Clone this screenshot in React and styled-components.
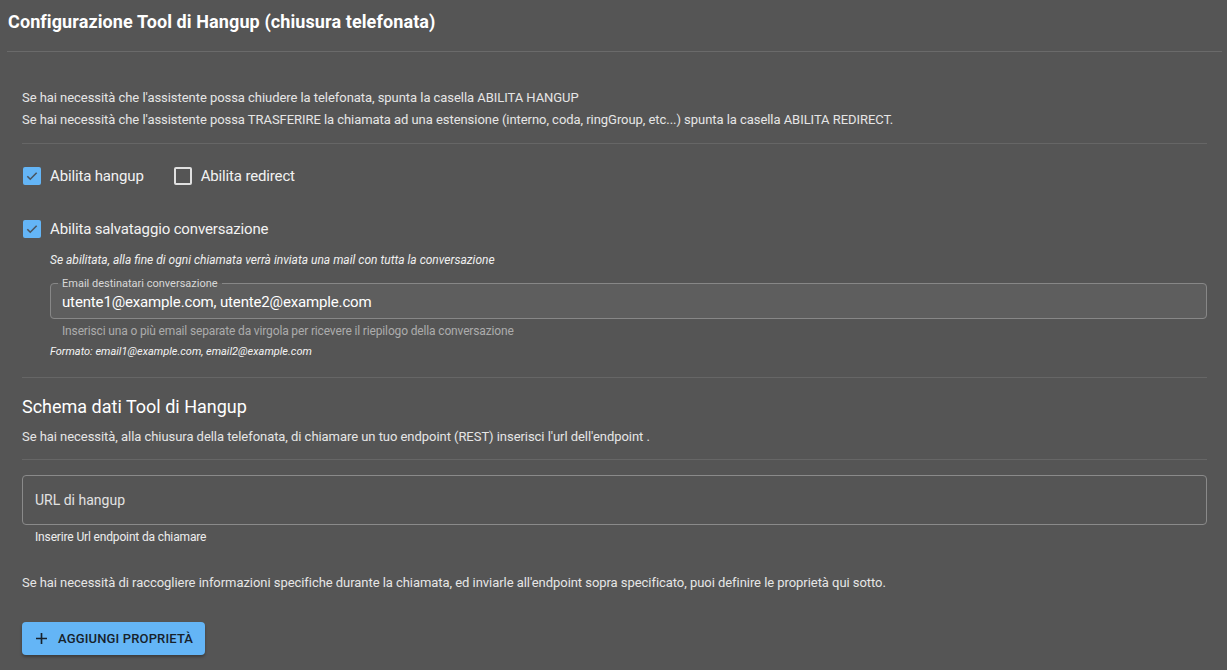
import React from 'react';
import styled, { createGlobalStyle } from 'styled-components';

const GlobalStyle = createGlobalStyle`
  html, body {
    margin: 0;
    padding: 0;
    background: #555555;
    font-family: Roboto, "Liberation Sans", sans-serif;
    color: #ececec;
  }
`;

const Page = styled.div`
  width: 1227px;
  min-height: 670px;
  background: #555555;
  box-sizing: border-box;
  padding: 0 5px 0 7px;
`;

const Header = styled.div`
  height: 52px;
  display: flex;
  align-items: center;
  padding-left: 1px;
  padding-bottom: 9px;
  box-sizing: border-box;
  border-bottom: 1px solid #6a6a6a;
`;

const Title = styled.h1`
  margin: 0;
  font-size: 18px;
  font-weight: 700;
  color: #ffffff;
  letter-spacing: 0.1px;
`;

const Body = styled.div`
  padding: 0 15px;
`;

const Intro = styled.div`
  padding: 35px 0 12px;
  border-bottom: 1px solid #666;
`;

const Line = styled.p`
  margin: ${p => p.$top || 0}px 0 0;
  font-size: 13px;
  line-height: 22px;
  color: #e6e6e6;
  letter-spacing: -0.05px;
`;

const CheckRow = styled.div`
  display: flex;
  align-items: center;
  gap: 30px;
  margin-top: ${p => p.$top}px;
  padding-left: 1px;
`;

const Check = styled.label`
  display: flex;
  align-items: center;
  gap: 9px;
  font-size: 15px;
  color: #f2f2f2;
  letter-spacing: -0.15px;
`;

const Box = styled.span`
  width: 18px;
  height: 18px;
  box-sizing: border-box;
  border-radius: 2px;
  display: flex;
  align-items: center;
  justify-content: center;
  background: ${p => p.$on ? '#64b5f6' : 'transparent'};
  border: ${p => p.$on ? 'none' : '2px solid #e0e0e0'};
`;

const Indent = styled.div`
  padding-left: 28px;
`;

const Note = styled.p`
  margin: 15px 0 0;
  font-size: 12px;
  line-height: 14px;
  font-style: italic;
  color: #f0f0f0;
`;

const Fieldset = styled.fieldset`
  margin: 11px 0 0;
  padding: 0 12px 0 11px;
  height: 41px;
  box-sizing: border-box;
  border: 1px solid #878787;
  border-radius: 4px;
  background: #5e5e5e;
`;

const Legend = styled.legend`
  padding: 0 4px;
  margin-left: -4px;
  font-size: 11px;
  line-height: 11px;
  color: #d8d8d8;
`;

const Value = styled.div`
  font-size: 15px;
  line-height: 20px;
  margin-top: 3px;
  color: #ffffff;
  letter-spacing: -0.15px;
`;

const Helper = styled.p`
  margin: ${p => p.$top}px 0 0;
  padding-left: ${p => p.$indent}px;
  font-size: 12px;
  line-height: 14px;
  color: ${p => p.$muted ? '#acacac' : '#eeeeee'};
  letter-spacing: -0.15px;
`;

const Format = styled.p`
  margin: 7px 0 0;
  font-size: 11px;
  line-height: 13px;
  font-style: italic;
  color: #f4f4f4;
`;

const Divider = styled.div`
  height: 1px;
  background: #666;
  margin-top: ${p => p.$top}px;
`;

const Section = styled.h2`
  margin: 18px 0 0;
  font-size: 18px;
  font-weight: 400;
  color: #ffffff;
  letter-spacing: 0;
`;

const UrlField = styled.div`
  margin-top: 15px;
  height: 50px;
  box-sizing: border-box;
  border: 1px solid #8a8a8a;
  border-radius: 4px;
  display: flex;
  align-items: center;
  padding-left: 12px;
  font-size: 14px;
  color: #e2e2e2;
`;

const Button = styled.button`
  margin-top: 28px;
  height: 33px;
  width: 183px;
  display: flex;
  align-items: center;
  gap: 11px;
  padding: 0 0 0 14px;
  border: none;
  border-radius: 4px;
  background: #64b5f6;
  box-shadow: 0 2px 3px rgba(0, 0, 0, 0.3);
  color: #17222c;
  font-family: Roboto, "Liberation Sans", sans-serif;
  font-size: 13px;
  font-weight: 500;
  letter-spacing: 0.15px;
  text-transform: uppercase;
`;

const Tick = () => (
  <svg width="14" height="14" viewBox="0 0 24 24">
    <path d="M4 12.5l5 5L20 6.5" fill="none" stroke="#4a5560" strokeWidth="2.8" />
  </svg>
);

const Plus = () => (
  <svg width="11" height="11" viewBox="0 0 12 12">
    <path d="M6 0v12M0 6h12" stroke="#17222c" strokeWidth="1.8" />
  </svg>
);

export default function App() {
  return (
    <>
      <GlobalStyle />
      <Page>
        <Header>
          <Title>Configurazione Tool di Hangup (chiusura telefonata)</Title>
        </Header>
        <Body>
          <Intro>
            <Line>Se hai necessità che l'assistente possa chiudere la telefonata, spunta la casella ABILITA HANGUP</Line>
            <Line>Se hai necessità che l'assistente possa TRASFERIRE la chiamata ad una estensione (interno, coda, ringGroup, etc...) spunta la casella ABILITA REDIRECT.</Line>
          </Intro>
          <CheckRow $top={23}>
            <Check><Box $on><Tick /></Box>Abilita hangup</Check>
            <Check><Box />Abilita redirect</Check>
          </CheckRow>
          <CheckRow $top={35}>
            <Check><Box $on><Tick /></Box>Abilita salvataggio conversazione</Check>
          </CheckRow>
          <Indent>
            <Note>Se abilitata, alla fine di ogni chiamata verrà inviata una mail con tutta la conversazione</Note>
            <Fieldset>
              <Legend>Email destinatari conversazione</Legend>
              <Value>utente1@example.com, utente2@example.com</Value>
            </Fieldset>
            <Helper $muted $indent={12} $top={5}>Inserisci una o più email separate da virgola per ricevere il riepilogo della conversazione</Helper>
            <Format>Formato: email1@example.com, email2@example.com</Format>
          </Indent>
          <Divider $top={19} />
          <Section>Schema dati Tool di Hangup</Section>
          <Line $top={9}>Se hai necessità, alla chiusura della telefonata, di chiamare un tuo endpoint (REST) inserisci l'url dell'endpoint .</Line>
          <Divider $top={11} />
          <UrlField>URL di hangup</UrlField>
          <Helper $indent={13} $top={5}>Inserire Url endpoint da chiamare</Helper>
          <Line $top={28}>Se hai necessità di raccogliere informazioni specifiche durante la chiamata, ed inviarle all'endpoint sopra specificato, puoi definire le proprietà qui sotto.</Line>
          <Button><Plus />Aggiungi proprietà</Button>
        </Body>
      </Page>
    </>
  );
}
